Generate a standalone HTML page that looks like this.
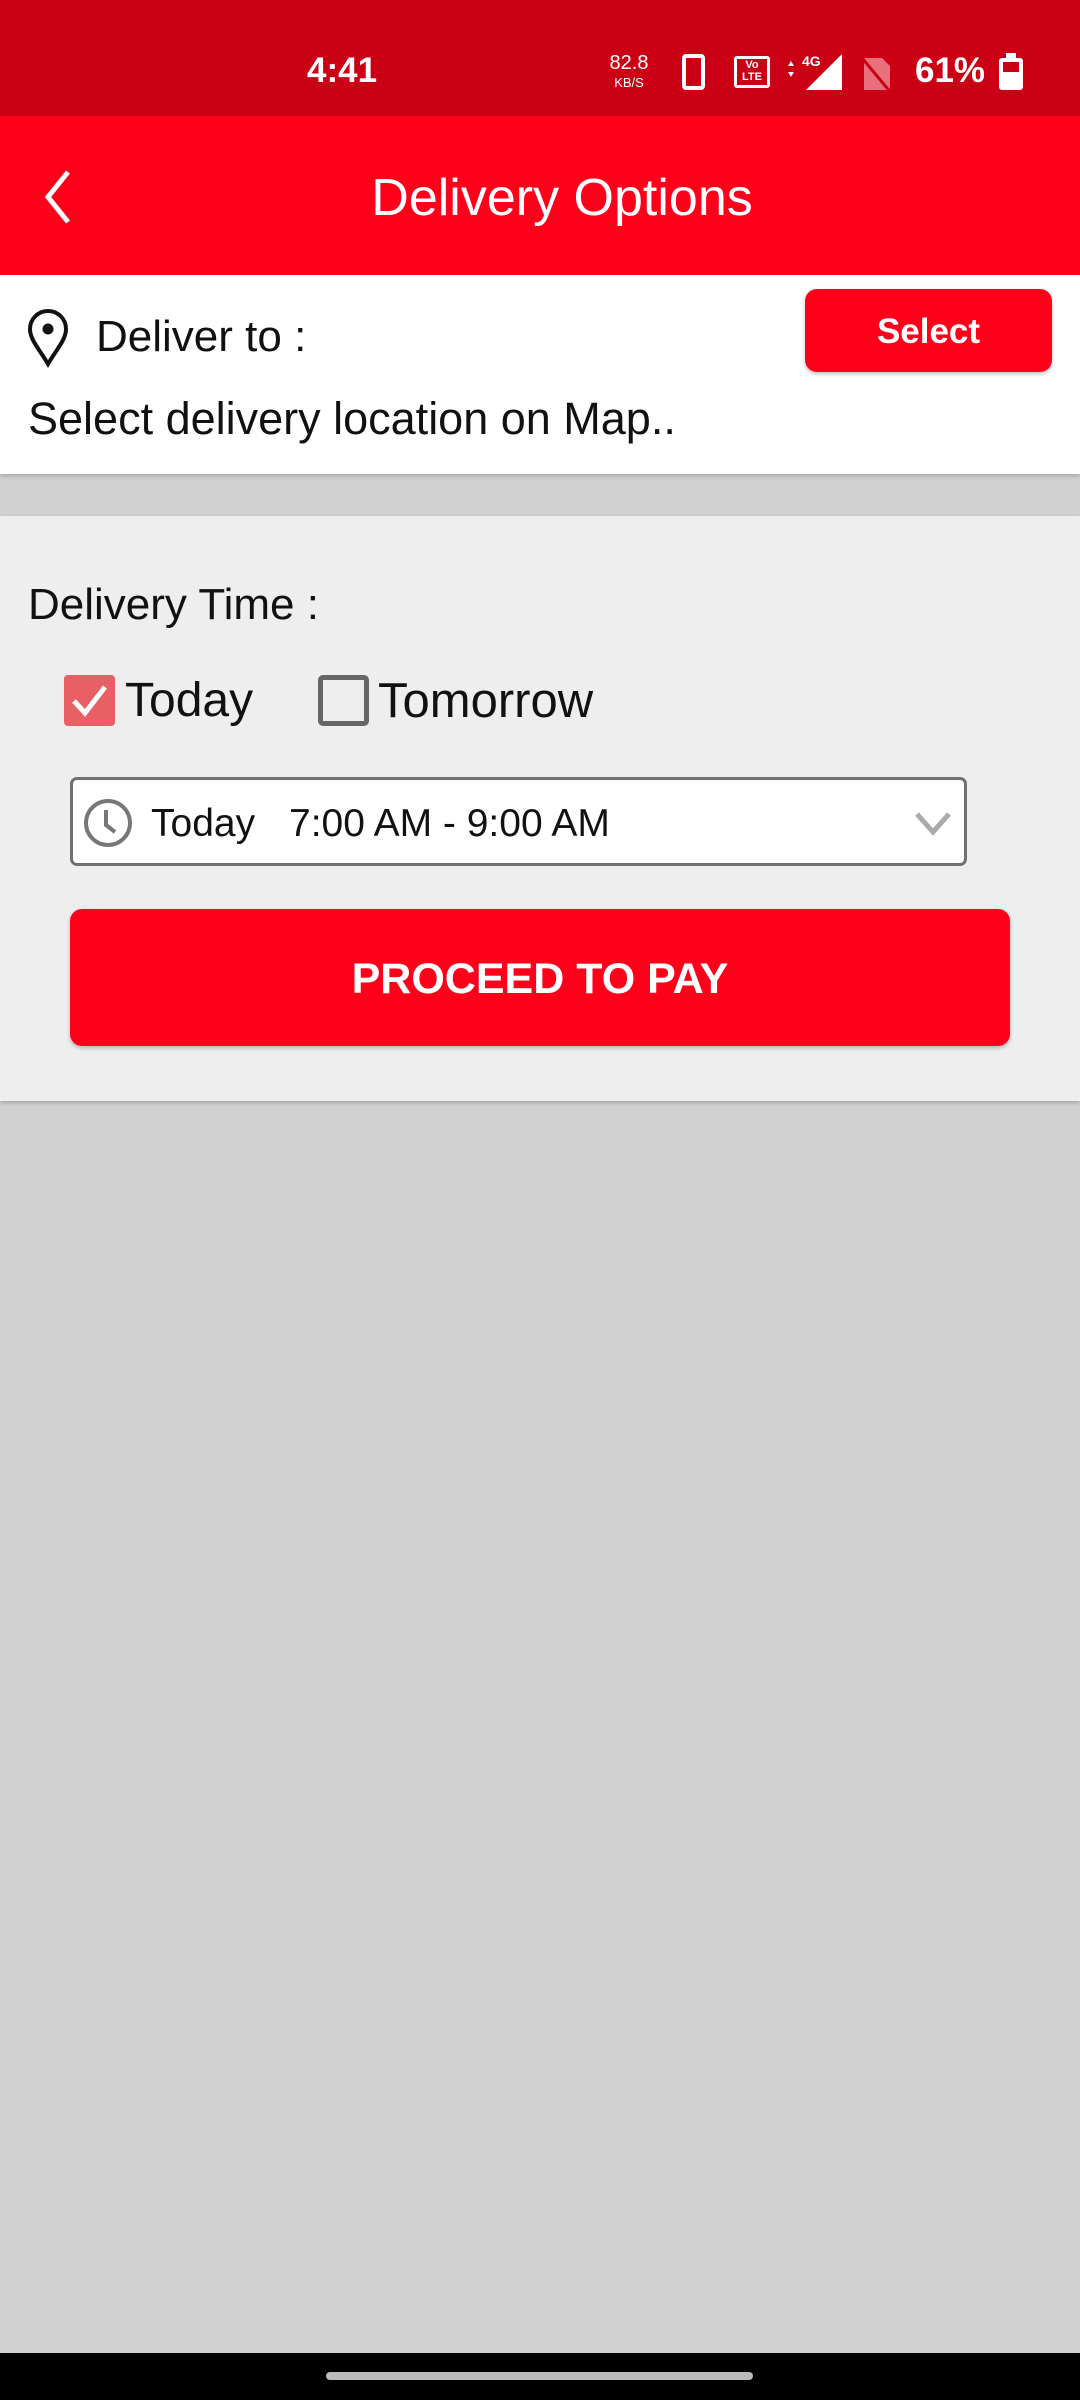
<!DOCTYPE html>
<html><head><meta charset="utf-8"><style>
*{margin:0;padding:0;box-sizing:border-box}
body{width:1080px;height:2400px;position:relative;background:#d0d0d0;font-family:"Liberation Sans",Roboto,sans-serif;overflow:hidden}
.abs{position:absolute}
</style></head><body>
<div class="abs" style="left:0;top:0;width:1080px;height:116px;background:#cc0015"></div>
<div class="abs" style="left:307px;top:51px;color:#fff;font-size:35px;font-weight:bold">4:41</div>
<div class="abs" style="left:606px;top:54px;color:#fff;font-size:20px;line-height:18px;text-align:center;width:46px">82.8<br><span style="font-size:13px">KB/S</span></div>
<div class="abs" style="left:682px;top:54px;width:23px;height:36px;border:4px solid #fff;border-radius:4px"></div>
<div class="abs" style="left:734px;top:56px;width:36px;height:32px;border:3px solid #fff;border-radius:3px;color:#fff;font-size:11px;font-weight:bold;line-height:12px;text-align:center">Vo<br>LTE</div>
<svg class="abs" style="left:784px;top:50px" width="60" height="42"><polygon points="58,4 58,40 22,40" fill="#fff"/><text x="18" y="16" font-size="14" fill="#fff" font-family="Liberation Sans" font-weight="bold">4G</text><polygon points="4,16 10,16 7,11" fill="#fff"/><polygon points="4,22 10,22 7,27" fill="#fff"/></svg>
<svg class="abs" style="left:860px;top:54px" width="34" height="40"><path d="M4 4 H22 L30 12 V36 H4 Z" fill="#e8707c"/><line x1="2" y1="4" x2="32" y2="40" stroke="#cc0015" stroke-width="3"/></svg>
<div class="abs" style="left:915px;top:51px;color:#fff;font-size:35px;font-weight:bold">61%</div>
<div class="abs" style="left:999px;top:58px;width:24px;height:32px;background:#fff;border-radius:3px"></div>
<div class="abs" style="left:1006px;top:53px;width:10px;height:6px;background:#fff"></div>
<div class="abs" style="left:1003px;top:62px;width:16px;height:10px;background:#cc0015"></div>

<div class="abs" style="left:0;top:116px;width:1080px;height:159px;background:#ff001b"></div>
<svg class="abs" style="left:40px;top:168px" width="40" height="58"><polyline points="28,4 8,29 28,54" fill="none" stroke="#fff" stroke-width="5"/></svg>
<div class="abs" style="left:0;top:168px;width:1124px;text-align:center;color:#fff;font-size:52px">Delivery Options</div>

<div class="abs" style="left:0;top:275px;width:1080px;height:199px;background:#fff;box-shadow:0 2px 4px rgba(0,0,0,.2)"></div>
<svg class="abs" style="left:26px;top:308px" width="46" height="60"><path d="M22 56 C14 42 4 32 4 21 A18 18 0 0 1 40 21 C40 32 30 42 22 56 Z" fill="none" stroke="#111" stroke-width="4"/><circle cx="22" cy="21" r="5.5" fill="#111"/></svg>
<div class="abs" style="left:96px;top:312px;font-size:44px;color:#111">Deliver to :</div>
<div class="abs" style="left:805px;top:289px;width:247px;height:83px;background:#ff001b;border-radius:12px;box-shadow:0 2px 4px rgba(0,0,0,.25);color:#fff;font-size:35px;font-weight:bold;text-align:center;line-height:86px">Select</div>
<div class="abs" style="left:28px;top:393px;font-size:45px;color:#111">Select delivery location on Map..</div>

<div class="abs" style="left:0;top:516px;width:1080px;height:585px;background:#eeeeee;box-shadow:0 2px 4px rgba(0,0,0,.2)"></div>
<div class="abs" style="left:28px;top:580px;font-size:44px;color:#111">Delivery Time :</div>
<div class="abs" style="left:64px;top:675px;width:51px;height:51px;background:#e86066;border-radius:4px"></div>
<svg class="abs" style="left:64px;top:675px" width="51" height="51"><polyline points="10,26 21,38 41,12" fill="none" stroke="#fff" stroke-width="5"/></svg>
<div class="abs" style="left:125px;top:673px;font-size:48px;color:#111">Today</div>
<div class="abs" style="left:318px;top:675px;width:51px;height:51px;border:5px solid #666;border-radius:5px"></div>
<div class="abs" style="left:378px;top:673px;font-size:49px;color:#111">Tomorrow</div>

<div class="abs" style="left:70px;top:777px;width:897px;height:89px;background:#fff;border:3px solid #707070;border-radius:7px"></div>
<svg class="abs" style="left:82px;top:797px" width="52" height="52"><circle cx="26" cy="26" r="22" fill="none" stroke="#777" stroke-width="4"/><polyline points="24,13 24,28 33,35" fill="none" stroke="#777" stroke-width="4"/></svg>
<div class="abs" style="left:151px;top:802px;font-size:39px;color:#111">Today</div>
<div class="abs" style="left:289px;top:802px;font-size:39px;color:#111">7:00 AM - 9:00 AM</div>
<svg class="abs" style="left:913px;top:810px" width="40" height="26"><polyline points="4,4 20,22 36,4" fill="none" stroke="#aaa" stroke-width="5"/></svg>

<div class="abs" style="left:70px;top:909px;width:940px;height:137px;background:#ff001b;border-radius:12px;box-shadow:0 2px 4px rgba(0,0,0,.25);color:#fff;font-size:43px;font-weight:bold;text-align:center;line-height:140px">PROCEED TO PAY</div>

<div class="abs" style="left:0;top:2353px;width:1080px;height:47px;background:#000"></div>
<div class="abs" style="left:326px;top:2372px;width:427px;height:8px;background:#bbb;border-radius:4px"></div>
</body></html>
